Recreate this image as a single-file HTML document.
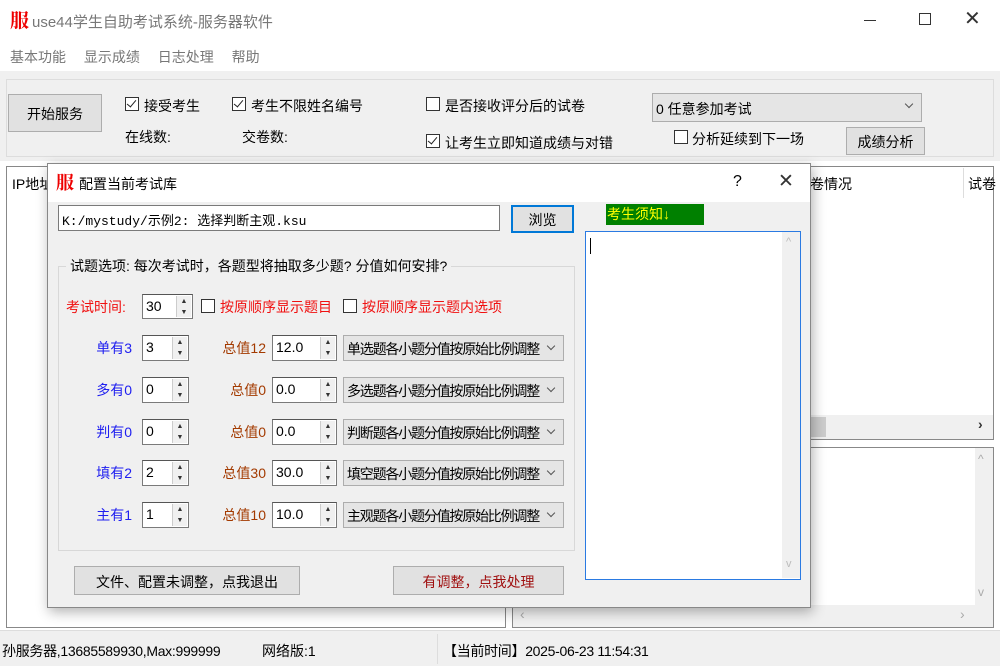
<!DOCTYPE html>
<html><head><meta charset="utf-8"><style>
*{box-sizing:border-box;margin:0;padding:0}
body{width:1000px;height:666px;position:relative;overflow:hidden;background:#fff;font-family:"Liberation Sans","Noto Sans CJK SC",sans-serif;font-size:14px;color:#000}
.a{position:absolute}
.cb{position:absolute;width:14px;height:14px;border:1px solid #333;background:#fff}
.cb.on::after{content:"";position:absolute;left:3px;top:0px;width:4px;height:8px;border:solid #222;border-width:0 1.5px 1.5px 0;transform:rotate(40deg)}
.btn{position:absolute;background:#e1e1e1;border:1px solid #adadad;text-align:center}
.spin{position:absolute;background:#fff;border:1px solid #7a7a7a;border-top-color:#555;height:26px;font-size:14px;padding:3px 0 0 3px}
.spin .ar{position:absolute;right:1px;top:1px;bottom:1px;width:15px;background:#f0f0f0;border-left:1px solid #ccc;font-size:7px;line-height:11px;text-align:center;color:#333}
.combo{position:absolute;background:#e5e5e5;border:1px solid #adadad;height:26px;padding:3px 0 0 3px;font-size:14px;letter-spacing:-1.2px;white-space:nowrap;overflow:hidden}
.combo::after{content:"";position:absolute;right:9px;top:7px;width:5px;height:5px;border:solid #555;border-width:0 1px 1px 0;transform:rotate(45deg)}
.lb{position:absolute;text-align:right;font-size:14px}
.blue{color:#2020f0}.brown{color:#a33a00}.red{color:#f01010}
</style></head><body>
<!-- title -->
<div class="a" style="left:10px;top:8px;color:#e00;font-family:'Noto Serif CJK SC',serif;font-size:19px;font-weight:bold;line-height:24px">服</div>
<div class="a" style="left:32px;top:11px;color:#777;font-size:15px">use44学生自助考试系统-服务器软件</div>
<div class="a" style="left:864px;top:20px;width:12px;border-top:1px solid #333"></div>
<div class="a" style="left:919px;top:13px;width:12px;height:12px;border:1px solid #333"></div>
<div class="a" style="left:964px;top:6px;font-size:20px;color:#333">✕</div>
<!-- menu -->
<div class="a" style="left:10px;top:47px;color:#777;font-size:14px;word-spacing:14px">基本功能 显示成绩 日志处理 帮助</div>
<!-- toolbar -->
<div class="a" style="left:0;top:71px;width:1000px;height:90px;background:#f0f0f0"></div>
<div class="a" style="left:6px;top:79px;width:988px;height:78px;border:1px solid #ddd"></div>
<div class="btn" style="left:8px;top:94px;width:94px;height:38px;padding-top:9px">开始服务</div>
<div class="cb on" style="left:125px;top:97px"></div><div class="a" style="left:144px;top:96px">接受考生</div>
<div class="a" style="left:125px;top:127px">在线数:</div>
<div class="cb on" style="left:232px;top:97px"></div><div class="a" style="left:251px;top:96px">考生不限姓名编号</div>
<div class="a" style="left:242px;top:127px">交卷数:</div>
<div class="cb" style="left:426px;top:97px"></div><div class="a" style="left:445px;top:96px">是否接收评分后的试卷</div>
<div class="cb on" style="left:426px;top:134px"></div><div class="a" style="left:445px;top:133px">让考生立即知道成绩与对错</div>
<div class="combo" style="left:652px;top:93px;width:270px;height:29px;padding-top:5px;font-size:14px;letter-spacing:0">0 任意参加考试</div>
<div class="cb" style="left:674px;top:130px"></div><div class="a" style="left:692px;top:129px">分析延续到下一场</div>
<div class="btn" style="left:846px;top:127px;width:79px;height:28px;padding-top:4px">成绩分析</div>
<!-- lists -->
<div class="a" style="left:6px;top:166px;width:500px;height:462px;border:1px solid #888;background:#fff"></div>
<div class="a" style="left:12px;top:174px">IP地址</div>
<div class="a" style="left:512px;top:166px;width:482px;height:274px;border:1px solid #888;background:#fff"></div>
<div class="a" style="left:810px;top:174px">卷情况</div>
<div class="a" style="left:963px;top:168px;height:30px;border-left:1px solid #ddd"></div>
<div class="a" style="left:968px;top:174px">试卷</div>
<div class="a" style="left:513px;top:415px;width:480px;height:24px;background:#f0f0f0"></div>
<div class="a" style="left:790px;top:417px;width:36px;height:20px;background:#ccc"></div>
<div class="a" style="left:978px;top:416px;font-weight:bold;color:#333">›</div>
<div class="a" style="left:512px;top:447px;width:482px;height:181px;border:1px solid #888;background:#f0f0f0"></div>
<div class="a" style="left:513px;top:448px;width:462px;height:157px;background:#fff"></div>
<div class="a" style="left:978px;top:452px;color:#aaa;font-size:12px">^</div>
<div class="a" style="left:978px;top:585px;color:#aaa;font-size:12px">v</div>
<div class="a" style="left:960px;top:606px;color:#aaa">›</div>
<div class="a" style="left:520px;top:606px;color:#aaa">‹</div>
<!-- status -->
<div class="a" style="left:0;top:630px;width:1000px;height:36px;background:#f0f0f0;border-top:1px solid #ddd"></div>
<div class="a" style="left:2px;top:641px;font-size:14px;letter-spacing:-0.3px">孙服务器,13685589930,Max:999999</div>
<div class="a" style="left:262px;top:641px;font-size:14px">网络版:1</div>
<div class="a" style="left:437px;top:634px;height:30px;border-left:1px solid #ddd"></div>
<div class="a" style="left:443px;top:641px;font-size:14px;letter-spacing:-0.3px">【当前时间】2025-06-23 11:54:31</div>
<!-- dialog -->
<div class="a" style="left:47px;top:163px;width:764px;height:445px;background:#f0f0f0;border:1px solid #888;box-shadow:2px 4px 12px rgba(0,0,0,.3)"></div>
<div class="a" style="left:48px;top:164px;width:762px;height:38px;background:#fff"></div>
<div class="a" style="left:56px;top:170px;color:#e00;font-family:'Noto Serif CJK SC',serif;font-size:18px;font-weight:bold;line-height:24px">服</div>
<div class="a" style="left:79px;top:174px;font-size:14px">配置当前考试库</div>
<div class="a" style="left:733px;top:173px;font-size:16px">?</div>
<div class="a" style="left:778px;top:170px;font-size:19px;color:#333">✕</div>
<div class="a" style="left:58px;top:205px;width:442px;height:26px;background:#fff;border:1px solid #7a7a7a;padding:4px 0 0 3px;font-family:'Liberation Mono','Noto Sans CJK SC',monospace;font-size:13px">K:/mystudy/示例2: 选择判断主观.ksu</div>
<div class="btn" style="left:511px;top:205px;width:63px;height:28px;border:2px solid #0078d7;padding-top:3px">浏览</div>
<div class="a" style="left:606px;top:204px;width:98px;height:21px;background:#008000;color:#ff0;font-size:14px;padding-left:1px">考生须知↓</div>
<div class="a" style="left:585px;top:231px;width:216px;height:349px;background:#fff;border:1px solid #2a7ae2"></div>
<div class="a" style="left:782px;top:232px;width:18px;height:346px;background:#f0f0f0"></div>
<div class="a" style="left:590px;top:238px;height:16px;border-left:1px solid #000"></div>
<div class="a" style="left:786px;top:236px;color:#bbb;font-size:11px">^</div>
<div class="a" style="left:786px;top:558px;color:#bbb;font-size:11px">v</div>
<!-- group -->
<div class="a" style="left:58px;top:266px;width:517px;height:285px;border:1px solid #d8d8d8"></div>
<div class="a" style="left:66px;top:256px;background:#f0f0f0;padding:0 4px;font-size:14px">试题选项: 每次考试时，各题型将抽取多少题? 分值如何安排?</div>
<div class="lb red" style="left:66px;top:297px">考试时间:</div>
<div class="spin" style="left:142px;top:294px;width:51px;height:25px">30<div class="ar">▲<br>▼</div></div>
<div class="cb" style="left:201px;top:299px"></div><div class="a red" style="left:220px;top:297px">按原顺序显示题目</div>
<div class="cb" style="left:343px;top:299px"></div><div class="a red" style="left:362px;top:297px">按原顺序显示题内选项</div>

<div class="lb blue" style="left:90px;top:338px;width:42px">单有3</div>
<div class="spin" style="left:142px;top:335px;width:47px">3<div class="ar">▲<br>▼</div></div>
<div class="lb brown" style="left:216px;top:338px;width:50px">总值12</div>
<div class="spin" style="left:272px;top:335px;width:65px">12.0<div class="ar">▲<br>▼</div></div>
<div class="combo" style="left:343px;top:335px;width:221px">单选题各小题分值按原始比例调整</div>

<div class="lb blue" style="left:90px;top:380px;width:42px">多有0</div>
<div class="spin" style="left:142px;top:377px;width:47px">0<div class="ar">▲<br>▼</div></div>
<div class="lb brown" style="left:216px;top:380px;width:50px">总值0</div>
<div class="spin" style="left:272px;top:377px;width:65px">0.0<div class="ar">▲<br>▼</div></div>
<div class="combo" style="left:343px;top:377px;width:221px">多选题各小题分值按原始比例调整</div>

<div class="lb blue" style="left:90px;top:422px;width:42px">判有0</div>
<div class="spin" style="left:142px;top:419px;width:47px">0<div class="ar">▲<br>▼</div></div>
<div class="lb brown" style="left:216px;top:422px;width:50px">总值0</div>
<div class="spin" style="left:272px;top:419px;width:65px">0.0<div class="ar">▲<br>▼</div></div>
<div class="combo" style="left:343px;top:419px;width:221px">判断题各小题分值按原始比例调整</div>

<div class="lb blue" style="left:90px;top:463px;width:42px">填有2</div>
<div class="spin" style="left:142px;top:460px;width:47px">2<div class="ar">▲<br>▼</div></div>
<div class="lb brown" style="left:216px;top:463px;width:50px">总值30</div>
<div class="spin" style="left:272px;top:460px;width:65px">30.0<div class="ar">▲<br>▼</div></div>
<div class="combo" style="left:343px;top:460px;width:221px">填空题各小题分值按原始比例调整</div>

<div class="lb blue" style="left:90px;top:505px;width:42px">主有1</div>
<div class="spin" style="left:142px;top:502px;width:47px">1<div class="ar">▲<br>▼</div></div>
<div class="lb brown" style="left:216px;top:505px;width:50px">总值10</div>
<div class="spin" style="left:272px;top:502px;width:65px">10.0<div class="ar">▲<br>▼</div></div>
<div class="combo" style="left:343px;top:502px;width:221px">主观题各小题分值按原始比例调整</div>

<div class="btn" style="left:74px;top:566px;width:226px;height:29px;padding-top:5px">文件、配置未调整，点我退出</div>
<div class="btn" style="left:393px;top:566px;width:171px;height:29px;padding-top:5px;color:#a01010">有调整，点我处理</div>
</body></html>
